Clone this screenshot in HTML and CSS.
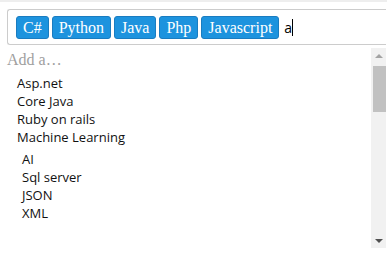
FILE: index.html
```html
<!DOCTYPE html>
<html lang="en">
<head>
  <meta charset="UTF-8">
  <title>Tags input</title>
  <link rel="stylesheet" href="styles.css">
</head>
<body>
  <!-- Tag box -->
  <div class="tag-box">
    <span class="tag">C#</span>
    <span class="tag">Python</span>
    <span class="tag">Java</span>
    <span class="tag">Php</span>
    <span class="tag">Javascript</span>
    <span class="typed">a</span><span class="caret"></span>
  </div>

  <!-- Suggestion list -->
  <div class="suggest">
    <div class="suggest-list">
      <div class="placeholder">Add a…</div>
      <ul class="group">
        <li>Asp.net</li>
        <li>Core Java</li>
        <li>Ruby on rails</li>
        <li>Machine Learning</li>
      </ul>
      <ul class="group group-sub">
        <li>AI</li>
        <li>Sql server</li>
        <li>JSON</li>
        <li>XML</li>
      </ul>
    </div>
    <div class="scrollbar">
      <div class="arrow arrow-up"></div>
      <div class="thumb"></div>
      <div class="track"></div>
      <div class="arrow arrow-down"></div>
    </div>
  </div>
</body>
</html>
```

FILE: styles.css
```css
* {
    margin: 0;
    padding: 0;
    box-sizing: border-box;
}

body {
    background-color: #fff;
    border-top: 2px solid #eeeeee;
    padding: 7px 1px 0 7px;
    font-family: "Liberation Serif", serif;
}

/* Tag box */
.tag-box {
    height: 36px;
    border: 1px solid #cccccc;
    border-right: none;
    border-radius: 3px 0 0 3px;
    padding: 5px 8px;
    display: flex;
    align-items: center;
    gap: 3px;
}

.tag {
    display: inline-block;
    height: 23px;
    line-height: 21px;
    padding: 0 6px;
    font-size: 16px;
    color: #fff;
    background-color: #1d93de;
    border: 1px solid #1a7cc0;
    border-radius: 3px;
}

.typed {
    margin-left: 2px;
    font-family: "Open Sans", sans-serif;
    font-size: 14px;
    color: #000;
}

.caret {
    display: inline-block;
    width: 1px;
    height: 17px;
    background-color: #000;
    margin-left: -3px;
}

/* Suggestion list */
.suggest {
    display: flex;
    height: 200px;
    margin-top: 3px;
}

.suggest-list {
    flex: 1;
}

.placeholder {
    font-size: 16px;
    color: #a0a0a0;
    line-height: 18px;
    margin-top: 3px;
}

.group {
    list-style: none;
    font-family: "Open Sans", sans-serif;
    font-size: 13px;
    color: #111;
    padding-left: 10px;
}

.group:first-of-type {
    margin-top: 5px;
}

.group li {
    line-height: 18px;
}

.group-sub {
    padding-left: 15px;
    margin-top: 4px;
}

/* Scrollbar */
.scrollbar {
    width: 15px;
    background-color: #f1f1f1;
    display: flex;
    flex-direction: column;
    align-items: center;
}

.arrow {
    width: 0;
    height: 0;
    border-left: 4px solid transparent;
    border-right: 4px solid transparent;
    margin: 6px 0;
}

.arrow-up {
    border-bottom: 4px solid #a3a3a3;
    margin-bottom: 8px;
}

.arrow-down {
    border-top: 4px solid #505050;
    margin-bottom: 5px;
}

.thumb {
    width: 13px;
    margin-left: 2px;
    height: 46px;
    background-color: #c1c1c1;
}

.track {
    flex: 1;
}
```
